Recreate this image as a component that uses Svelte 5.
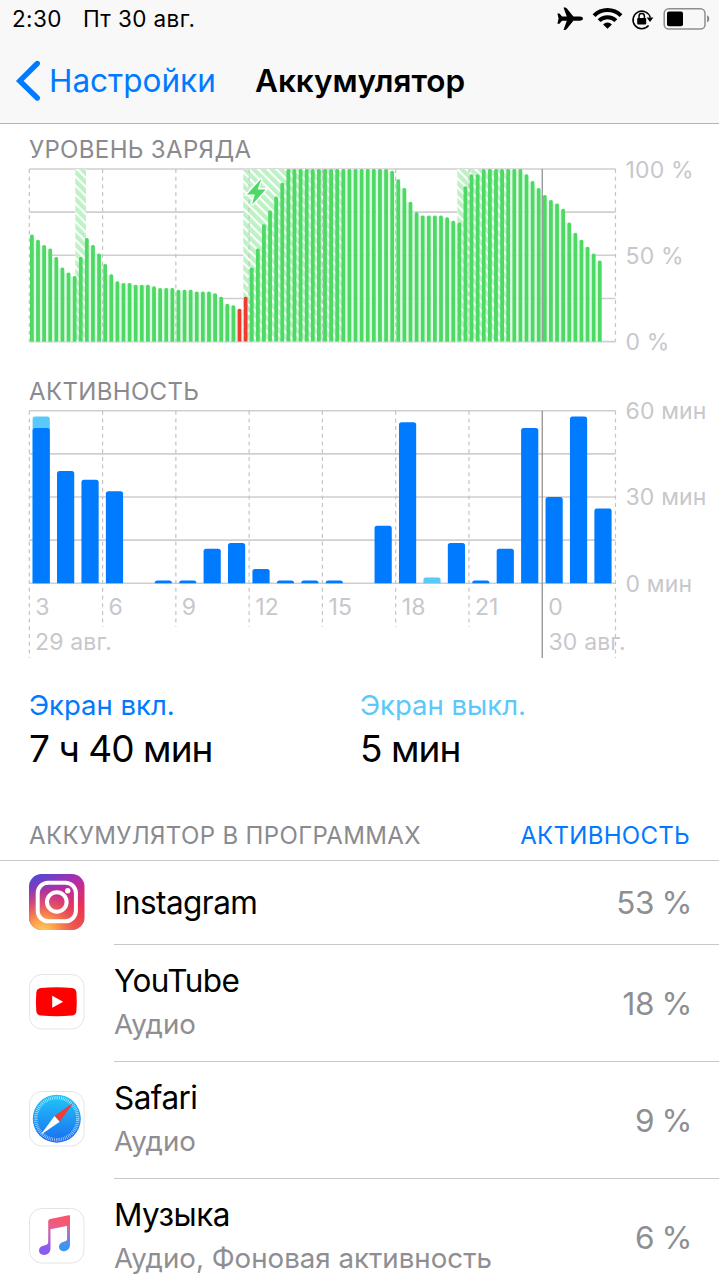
<script lang="ts">
	interface HourUsage {
		on: number;
		off: number;
	}

	interface AppUsage {
		id: string;
		name: string;
		detail?: string;
		share: number;
	}

	const CHART_LEFT = 29.3;
	const CHART_RIGHT = 615.5;
	const CHART_HEIGHT = 172.6;
	const HOUR = (CHART_RIGHT - CHART_LEFT) / 24;
	const QUARTER = HOUR / 4;

	// battery percentage, one reading per 15 minutes
	const levels = [
		62, 59, 56, 54, 49, 43, 40, 38, 49, 60, 56, 51, 45, 39, 35, 34, 34, 33, 33, 33, 32, 31, 31, 31,
		30, 30, 30, 29, 29, 29, 28, 26, 22, 21, 19, 26, 43, 54, 68, 76, 84, 92, 100, 100, 100, 100, 100,
		100, 100, 100, 100, 100, 100, 100, 100, 100, 100, 100, 100, 99, 94, 89, 81, 75, 73, 73, 73, 73,
		72, 70, 69, 90, 97, 97, 100, 100, 100, 100, 100, 100, 100, 97, 93, 89, 85, 82, 80, 77, 69, 63,
		59, 55, 51, 47
	];
	const lowReadings = [34, 35];

	const charging = [
		{ from: 75.3, to: 86 },
		{ from: 243.2, to: 342.4 },
		{ from: 457.3, to: 510.4 }
	];

	const minutes = [54, 39, 36, 32, 0, 1, 1, 12, 14, 5, 1, 1, 1, 0, 20, 56, 0, 14, 1, 12, 54, 30, 58, 26];
	const idle: Record<number, number> = { 0: 4, 16: 2 };
	const hours: HourUsage[] = minutes.map((on, i) => ({ on, off: idle[i] ?? 0 }));

	const ticks = ['3', '6', '9', '12', '15', '18', '21', '0', ''];
	const MIDNIGHT = 7;

	const apps: AppUsage[] = [
		{ id: 'instagram', name: 'Instagram', share: 53 },
		{ id: 'youtube', name: 'YouTube', detail: 'Аудио', share: 18 },
		{ id: 'safari', name: 'Safari', detail: 'Аудио', share: 9 },
		{ id: 'music', name: 'Музыка', detail: 'Аудио, Фоновая активность', share: 6 }
	];

	const tickX = (i: number) => CHART_LEFT + i * 3 * HOUR;
	const levelX = (i: number) => CHART_LEFT + 0.7 + i * QUARTER;
	const levelH = (v: number) => (v / 100) * CHART_HEIGHT;
	const minuteH = (v: number) => (v / 60) * CHART_HEIGHT;

	// bar with rounded top corners and a flat base
	function barPath(x: number, top: number, w: number, bottom: number, r: number): string {
		const c = Math.min(r, bottom - top);
		return `M${x} ${bottom}V${top + c}a${r} ${c} 0 0 1 ${r} ${-c}h${w - 2 * r}a${r} ${c} 0 0 1 ${r} ${c}V${bottom}z`;
	}
</script>

<div class="screen">
	<header>
		<div class="status">
			<span class="time">2:30</span>
			<span class="date">Пт 30 авг.</span>
			<svg class="status-icons" width="156" height="30" viewBox="555 4 156 30">
				<path
					d="M583 18.6c0-1.400-1.400-2.100-3.200-2.100h-6.400l-6.900-8.400c-.4-.5-.8-.7-1.400-.7h-1.600l3.300 9.100h-4.800l-2.500-3.100h-2.100l1.200 5.200-1.200 5.200h2.100l2.500-3.100h4.800l-3.300 9.300h1.600c.6 0 1-.2 1.400-.7l6.900-8.600h6.400c1.800 0 3.200-.7 3.200-2.100z"
				/>
				<g fill="none" stroke="#000" stroke-width="4">
					<path d="M594 15.6a19 19 0 0 1 27 0" />
					<path d="M599.1 20.7a11.8 11.8 0 0 1 16.8 0" />
				</g>
				<path d="M607.5 28.8l-4.4-4.4a6.3 6.3 0 0 1 8.8 0z" />
				<path
					d="M648.6 25.600a8.800 8.800 0 1 1 1.700-8.100"
					fill="none"
					stroke="#000"
					stroke-width="1.600"
				/>
				<path d="M646.6 17.6h6.8l-3.4 4.4z" />
				<rect x="637.200" y="18" width="9" height="6.500" rx="1" />
				<path d="M639 18v-1.800a2.700 2.700 0 0 1 5.400 0V18" fill="none" stroke="#000" stroke-width="1.500" />
				<rect x="664.2" y="8.700" width="40.800" height="20.400" rx="4.600" fill="none" stroke="#8e8e8e" stroke-width="1.500" />
				<rect x="667" y="11.600" width="16" height="14.600" rx="2" />
				<path d="M707 15.2q2.4.8 2.4 3.700t-2.400 3.700z" fill="#8e8e8e" />
			</svg>
		</div>
		<nav>
			<button class="back">
				<svg width="24" height="42" viewBox="0 0 24 42">
					<path d="M21.3 3.5L3.8 20.900 21.300 38" fill="none" stroke="#007aff" stroke-width="5.400" stroke-linecap="round" />
				</svg>
				<span>Настройки</span>
			</button>
			<h1>Аккумулятор</h1>
		</nav>
	</header>

	<section class="level">
		<h2>УРОВЕНЬ ЗАРЯДА</h2>
		<svg width="719" height="190" viewBox="0 160 719 190">
			<defs>
				<pattern id="hatch" width="6.4" height="6.4" patternUnits="userSpaceOnUse" patternTransform="rotate(-45)">
					<rect width="4.3" height="6.4" fill="#bdf2c5" />
				</pattern>
			</defs>
			{#each [0, 1, 2, 3, 4] as row}
				<path class="grid" d="M{CHART_LEFT} {169 + row * 43.15}H{CHART_RIGHT}" />
			{/each}
			{#each levels.slice(0, -1) as level, i}
				{@const h = levelH(Math.min(level, levels[i + 1]))}
				<rect class="gap" x={levelX(i) + 3.8} y={341.6 - h} width="2.3" height={h} />
			{/each}
			{#each charging as span}
				<rect x={span.from} y="169" width={span.to - span.from} height="172.6" fill="#fff" />
				<rect x={span.from} y="169" width={span.to - span.from} height="172.6" fill="url(#hatch)" />
			{/each}
			{#each ticks as _, i}
				<path class={i === MIDNIGHT ? 'midnight' : 'tick'} d="M{tickX(i)} 169V341.6" />
			{/each}
			{#each levels as level, i}
				<path
					class={lowReadings.includes(i) ? 'low' : 'charge'}
					d={barPath(levelX(i), 341.6 - levelH(level), 3.8, 341.6, 1.6)}
				/>
			{/each}
			<path
				d="M261.5 178.5L247 194.6h7.8l-2.8 10.2 13.6-15.2h-8z"
				fill="#4cd964"
				stroke="#fff"
				stroke-width="3"
				paint-order="stroke"
			/>
			<text x="625.5" y="177.5">100 %</text>
			<text x="625.5" y="263.5">50 %</text>
			<text x="625.5" y="350">0 %</text>
		</svg>
	</section>

	<section class="activity">
		<h2>АКТИВНОСТЬ</h2>
		<svg width="719" height="260" viewBox="0 402 719 260">
			{#each [0, 1, 2, 3, 4] as row}
				<path class="grid" d="M{CHART_LEFT} {410.7 + row * 43.15}H{CHART_RIGHT}" />
			{/each}
			{#each ticks as label, i}
				<path
					class={i === MIDNIGHT ? 'midnight' : 'tick'}
					d="M{tickX(i)} 410.7V{i === 0 || i >= MIDNIGHT ? 658 : 627}"
				/>
				<text x={tickX(i) + 6} y="615">{label}</text>
			{/each}
			{#each hours as hour, i}
				{@const x = CHART_LEFT + 3.3 + i * HOUR}
				{#if hour.off}
					<path class="off" d={barPath(x, 583.3 - minuteH(hour.on + hour.off), 17.2, 583.3, 2.5)} />
				{/if}
				{#if hour.on}
					<path class="on" d={barPath(x, 583.3 - minuteH(hour.on), 17.2, 583.3, 2.5)} />
				{/if}
			{/each}
			<text x="35" y="650">29 авг.</text>
			<text x="548.5" y="650">30 авг.</text>
			<text x="625.5" y="419">60 мин</text>
			<text x="625.5" y="505">30 мин</text>
			<text x="625.5" y="591.5">0 мин</text>
		</svg>
	</section>

	<section class="totals">
		<div class="total">
			<span class="total-label">Экран вкл.</span>
			<span class="total-value">7 ч 40 мин</span>
		</div>
		<div class="total screen-off">
			<span class="total-label">Экран выкл.</span>
			<span class="total-value">5 мин</span>
		</div>
	</section>

	<div class="list-header">
		<h2>АККУМУЛЯТОР В ПРОГРАММАХ</h2>
		<button>АКТИВНОСТЬ</button>
	</div>

	<ul>
		{#each apps as app}
			<li class:tall={app.detail}>
				<svg class="app-icon" width="56" height="56" viewBox="0 0 56 56">
					{#if app.id === 'instagram'}
						<defs>
							<linearGradient id="ig" x1="0.25" y1="0" x2="0.75" y2="1">
								<stop offset="0" stop-color="#5a45d0" />
								<stop offset="0.35" stop-color="#b62ba5" />
								<stop offset="0.7" stop-color="#e5305a" />
								<stop offset="1" stop-color="#ee4a48" />
							</linearGradient>
							<radialGradient id="ig-glow" cx="0.25" cy="1.05" r="0.85">
								<stop offset="0" stop-color="#ffd25e" />
								<stop offset="0.3" stop-color="#fd9c4a" />
								<stop offset="1" stop-color="#e53a5c" stop-opacity="0" />
							</radialGradient>
						</defs>
						<rect width="55.5" height="56" rx="12.5" fill="url(#ig)" />
						<rect width="55.5" height="56" rx="12.5" fill="url(#ig-glow)" />
						<rect x="8.7" y="8.7" width="38.2" height="38.6" rx="10.5" fill="none" stroke="#fff" stroke-width="4" />
						<circle cx="27.8" cy="28" r="9.8" fill="none" stroke="#fff" stroke-width="4" />
						<circle cx="38.7" cy="16.8" r="2.7" fill="#fff" />
					{:else}
						<rect x="0.5" y="0.5" width="54.5" height="54.5" rx="12.5" fill="#fff" stroke="#e4e4e4" />
						{#if app.id === 'youtube'}
							<path
								d="M12 13.900Q27.500 12.700 43 13.900 47 14.200 47.400 18.500 48.200 28 47.400 37 47 41.300 43 41.600 27.500 42.800 12 41.600 7.700 41.300 7.300 37 6.500 28 7.300 18.500 7.700 14.200 12 13.900z"
								fill="#f00"
							/>
							<path d="M23.2 21.700L34.200 27.800 23.200 33.800z" fill="#fff" />
						{:else if app.id === 'safari'}
							<defs>
								<linearGradient id="sky" x1="0" y1="0" x2="0" y2="1">
									<stop offset="0" stop-color="#1fc8f9" />
									<stop offset="1" stop-color="#1b6cf0" />
								</linearGradient>
							</defs>
							<circle cx="27.800" cy="27.700" r="24" fill="url(#sky)" />
							<circle cx="27.800" cy="27.700" r="21" fill="none" stroke="#fff" stroke-width="3.400" stroke-dasharray="0.700 1.132" opacity="0.7" />
							<path d="M44.500 11.500L30.700 30.700 25.500 25z" fill="#f13b37" />
							<path d="M11.500 44L30.700 30.700 25.500 25z" fill="#fff" />
						{:else}
							<defs>
								<linearGradient id="note" x1="0.6" y1="0" x2="0.4" y2="1">
									<stop offset="0.1" stop-color="#f9566c" />
									<stop offset="0.45" stop-color="#d467a8" />
									<stop offset="0.85" stop-color="#8a5cf0" />
								</linearGradient>
								<linearGradient id="note-right" x1="0" y1="0" x2="0" y2="1">
									<stop offset="0.1" stop-color="#f4607c" />
									<stop offset="0.5" stop-color="#a878c8" />
									<stop offset="0.85" stop-color="#3b96f2" />
								</linearGradient>
							</defs>
							<path
								d="M38 8.200L41 7.500V36.500C41 40.500 38.500 42.800 35.300 43.200 32 43.600 30 41.500 30 38.800 30 36 32 34 35.500 33.400 37.500 33 38 32.500 38 31z"
								fill="url(#note-right)"
							/>
							<path
								d="M39.700 7.300L21.200 11Q19.200 11.400 19.200 13.500V33.500C19.200 35.500 18.500 36.700 16 37.200 12 38 10 39.500 10 42.600 10 45.500 12 47 14.800 47 18.500 47 21.500 44.800 21.500 40.300V21.300L41 17.300V8.500Q41 7 39.700 7.300z"
								fill="url(#note)"
							/>
						{/if}
					{/if}
				</svg>
				<div class="row">
					<div class="names">
						<span class="name">{app.name}</span>
						{#if app.detail}
							<span class="detail">{app.detail}</span>
						{/if}
					</div>
					<span class="share">{app.share} %</span>
				</div>
			</li>
		{/each}
	</ul>
</div>

<style>
	:global(body) {
		background: #fff;
	}

	.screen {
		width: 719px;
		height: 1280px;
		overflow: hidden;
		background: #fff;
		color: #000;
		font-family: Inter, 'Liberation Sans', sans-serif;
	}

	h1,
	h2,
	ul {
		margin: 0;
		padding: 0;
		font-weight: 400;
	}

	svg {
		display: block;
		flex-shrink: 0;
		overflow: visible;
	}

	button {
		padding: 0;
		border: none;
		background: none;
		font-family: inherit;
		color: #007aff;
	}

	header {
		box-sizing: border-box;
		height: 124px;
		background: #f8f8f8;
		border-bottom: 1px solid #b4b4b6;
	}

	.status {
		display: flex;
		align-items: center;
		height: 38px;
		padding: 0 8px 0 12px;
		font-size: 22.5px;
		letter-spacing: 0.4px;
	}

	.time,
	.date {
		padding-bottom: 2px;
	}

	.date {
		margin-left: 21px;
	}

	.status-icons {
		margin-left: auto;
	}

	nav {
		display: flex;
		align-items: center;
		height: 85px;
		padding-left: 16px;
	}

	.back {
		display: flex;
		align-items: center;
		gap: 9px;
		width: 239px;
		font-size: 31.5px;
	}

	h1 {
		font-size: 31.5px;
		font-weight: 600;
	}

	h2 {
		font-size: 24px;
		line-height: 30px;
		letter-spacing: 0.35px;
		color: #8a8a8f;
	}

	.level h2 {
		padding: 11px 0 0 29px;
		height: 25px;
	}

	.activity h2 {
		padding: 27px 0 0 29px;
		height: 25px;
	}

	.grid {
		stroke: #cfcfd1;
		stroke-width: 1.6;
	}

	.tick {
		stroke: #c4c4c6;
		stroke-width: 1.2;
		stroke-dasharray: 4 3.7;
	}

	.midnight {
		stroke: #8a8a8c;
		stroke-width: 1.2;
	}

	.gap {
		fill: #e2fae5;
	}

	.charge {
		fill: #4cd964;
	}

	.low {
		fill: #f03c30;
	}

	.on {
		fill: #007aff;
	}

	.off {
		fill: #5ac8fa;
	}

	text {
		font-size: 23px;
		letter-spacing: 0.15px;
		fill: #c7c7cc;
	}

	.totals {
		display: flex;
		height: 149px;
		padding: 26px 0 0 29px;
		box-sizing: border-box;
	}

	.total {
		display: flex;
		flex-direction: column;
		width: 331px;
	}

	.total-label {
		font-size: 27.5px;
		line-height: 34px;
		color: #007aff;
	}

	.screen-off .total-label {
		color: #5ac8fa;
	}

	.total-value {
		font-size: 37px;
		line-height: 53px;
		letter-spacing: -0.95px;
	}

	.list-header {
		display: flex;
		justify-content: space-between;
		align-items: center;
		box-sizing: border-box;
		height: 50px;
		padding: 0 29px;
		border-bottom: 1px solid #c8c7cc;
	}

	.list-header button {
		font-size: 24px;
		letter-spacing: 0.3px;
	}

	ul {
		list-style: none;
	}

	li {
		display: flex;
		align-items: center;
		height: 84px;
		padding-left: 29px;
		gap: 29px;
	}

	li.tall {
		height: 117px;
	}

	.app-icon {
		margin-bottom: 2px;
	}

	.tall .app-icon {
		margin-bottom: 4px;
	}

	.row {
		display: flex;
		flex: 1;
		align-items: center;
		justify-content: space-between;
		align-self: stretch;
		padding-right: 27px;
		border-bottom: 1px solid #c8c7cc;
	}

	.names {
		display: flex;
		flex-direction: column;
	}

	.tall .names {
		gap: 1px;
		padding-bottom: 2px;
	}

	.name {
		font-size: 31.5px;
		line-height: 42px;
		letter-spacing: -0.55px;
	}

	.detail {
		font-size: 27.7px;
		line-height: 42px;
		color: #8e8e93;
	}

	.share {
		font-size: 31.5px;
		letter-spacing: -0.4px;
		word-spacing: -1px;
		color: #8e8e93;
	}
</style>
